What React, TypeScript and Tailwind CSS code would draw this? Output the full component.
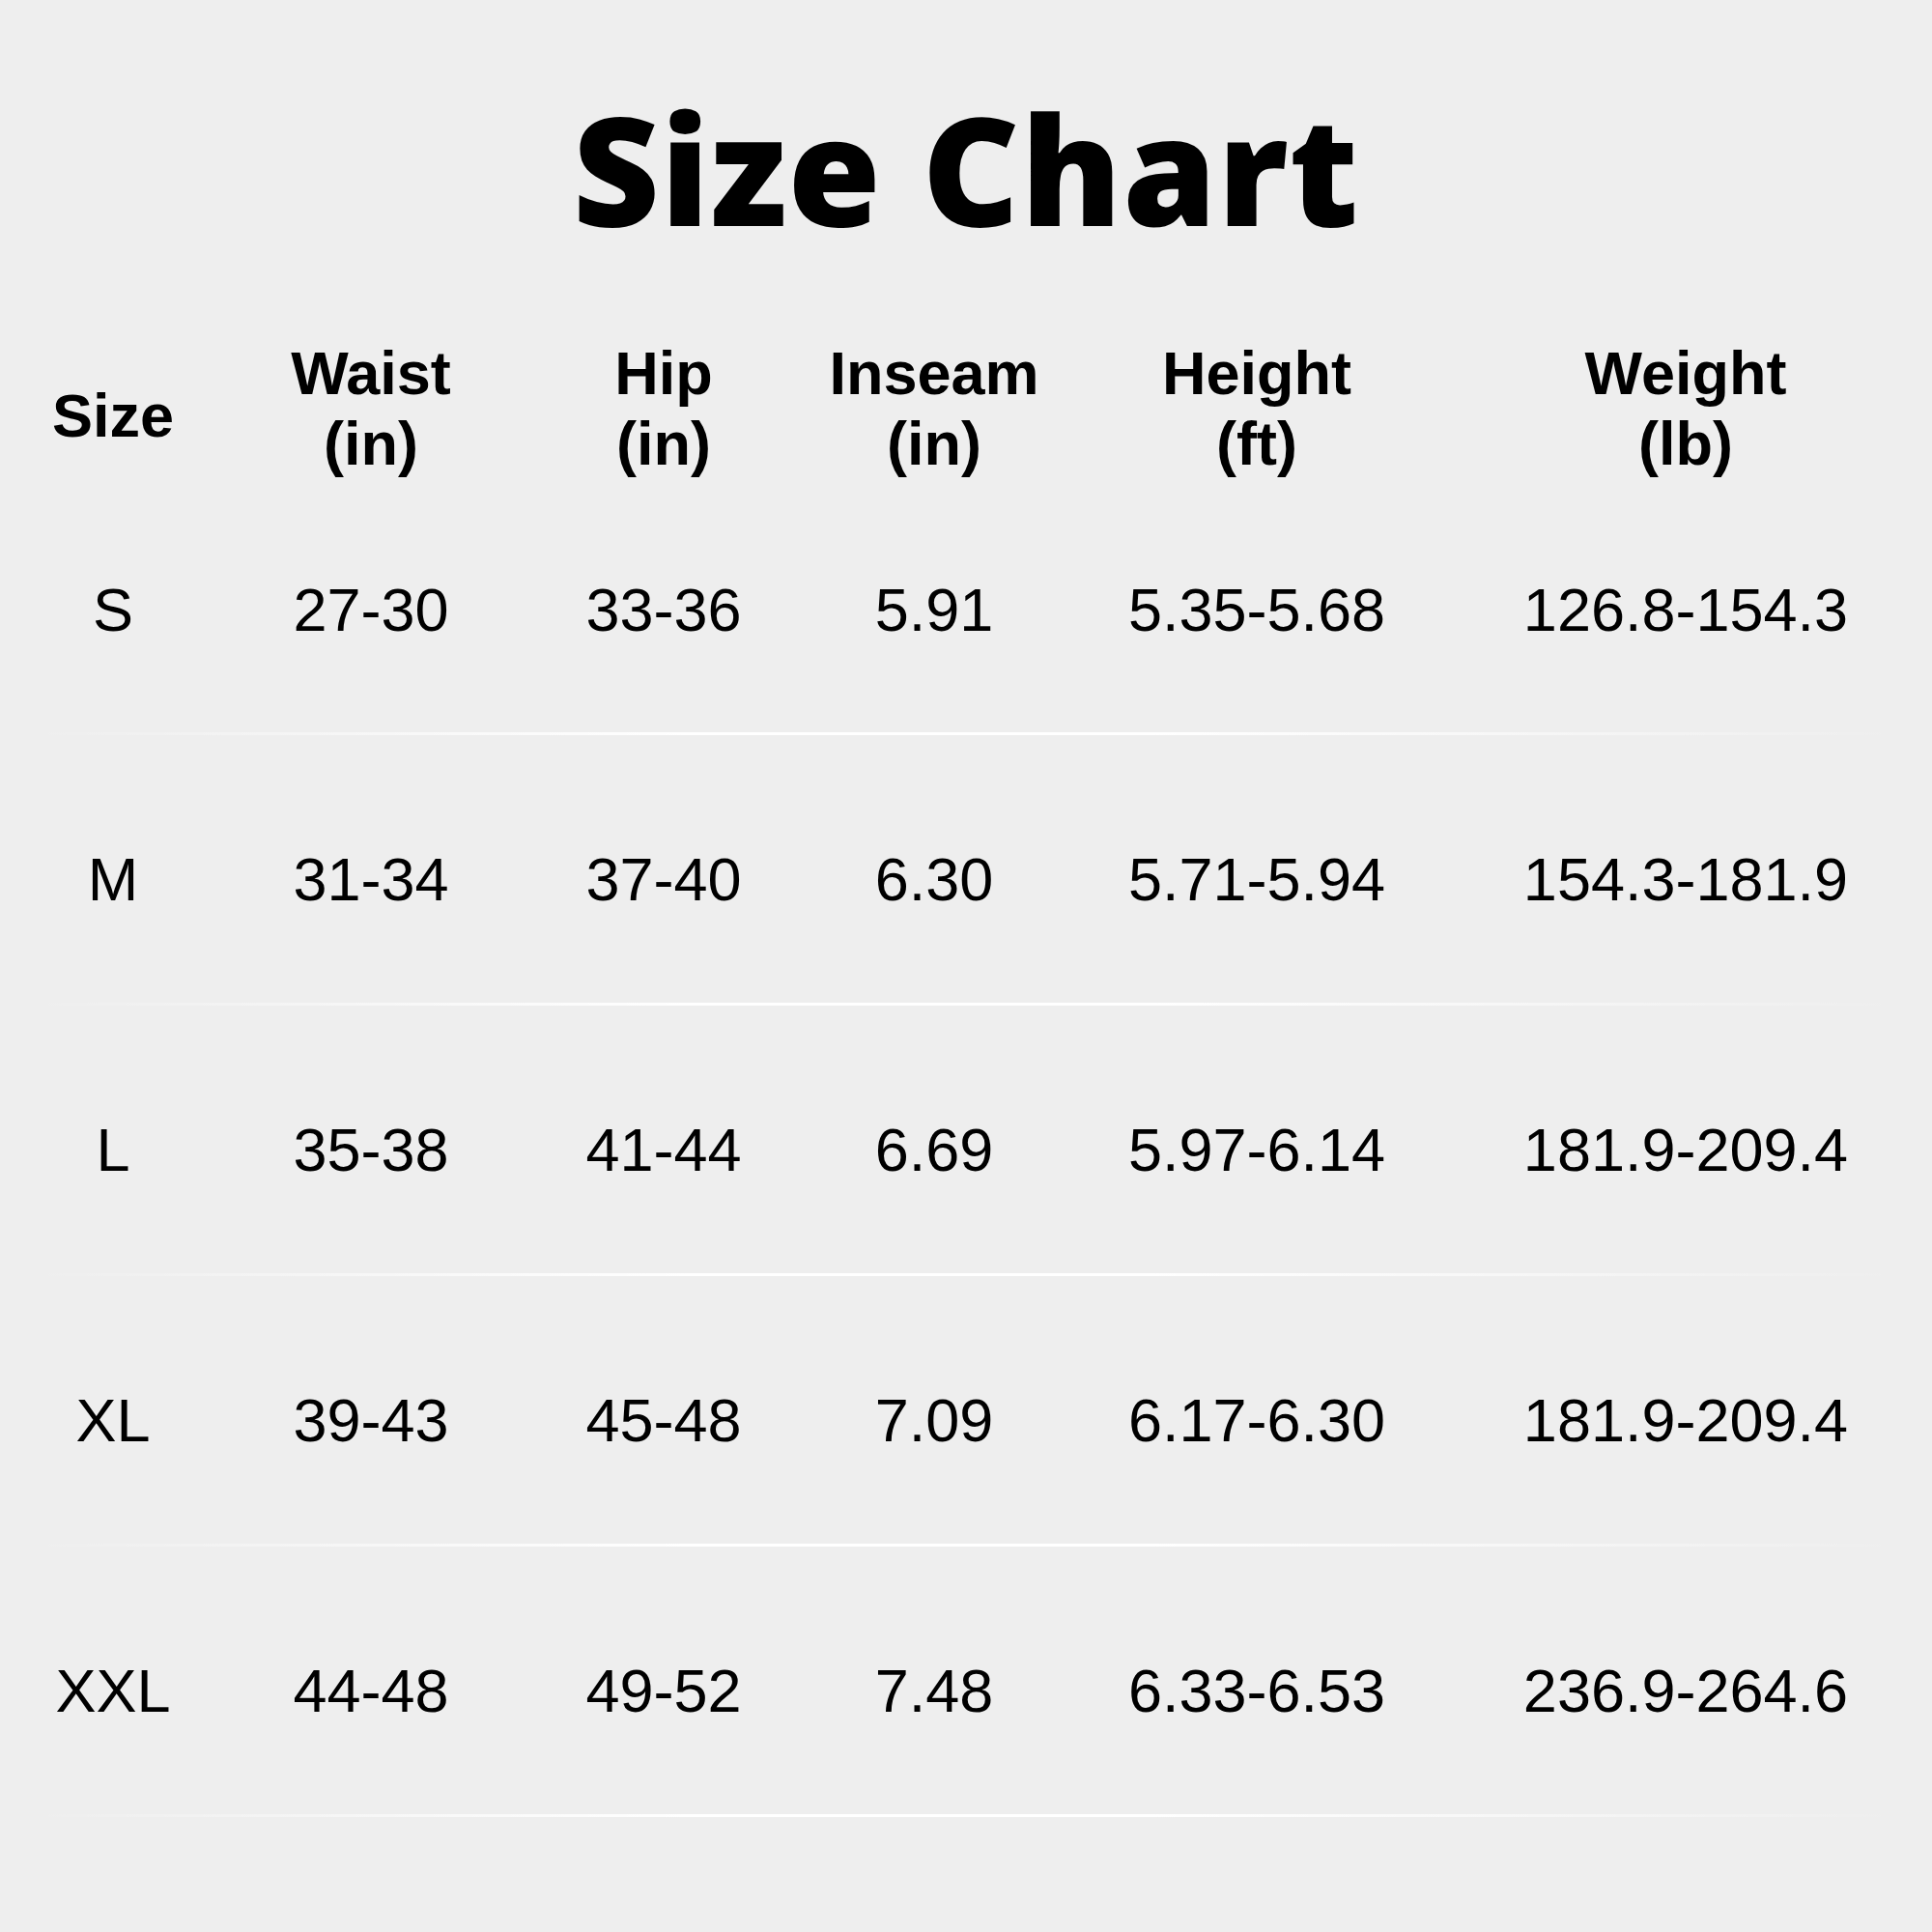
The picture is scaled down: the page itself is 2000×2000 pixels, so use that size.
const columns = [
  { w: "w-[234px]", head: ["Size"] },
  { w: "w-[300px]", head: ["Waist", "(in)"] },
  { w: "w-[306px]", head: ["Hip", "(in)"] },
  { w: "w-[254px]", head: ["Inseam", "(in)"] },
  { w: "w-[414px]", head: ["Height", "(ft)"] },
  { w: "w-[474px]", head: ["Weight", "(lb)"] },
];

const rows = [
  ["S", "27-30", "33-36", "5.91", "5.35-5.68", "126.8-154.3"],
  ["M", "31-34", "37-40", "6.30", "5.71-5.94", "154.3-181.9"],
  ["L", "35-38", "41-44", "6.69", "5.97-6.14", "181.9-209.4"],
  ["XL", "39-43", "45-48", "7.09", "6.17-6.30", "181.9-209.4"],
  ["XXL", "44-48", "49-52", "7.48", "6.33-6.53", "236.9-264.6"],
];

export default function App() {
  return (
    <div className="w-[2000px] h-[2000px] bg-[#eeeeee] text-black font-['Liberation_Sans',Arial,sans-serif]">
      {/* title */}
      <h1 className="pt-[96px] pb-[4px] text-center text-[156px] leading-none font-extrabold font-['Open_Sans',sans-serif] tracking-[1px]">
        Size Chart
      </h1>

      {/* header */}
      <div className="flex pt-[94px]">
        {columns.map((c, i) => (
          <div
            key={i}
            className={`${c.w} flex flex-col items-center justify-center text-[63px] leading-[73px] font-bold ${i === 0 ? "pt-[14px]" : ""}`}
          >
            {c.head.map((h) => (
              <span key={h}>{h}</span>
            ))}
          </div>
        ))}
      </div>

      {/* data rows */}
      {rows.map((r, ri) => (
        <div key={ri}>
          <div className={`flex ${ri === 0 ? "pt-[104px] h-[262px]" : "pt-[118px] h-[277px]"}`}>
            {r.map((v, ci) => (
              <div key={ci} className={`${columns[ci].w} text-center text-[63px] leading-[63px]`}>
                {v}
              </div>
            ))}
          </div>
          <div className="mx-[30px] h-[3px] bg-[linear-gradient(to_right,transparent,#ffffff_35%,#ffffff_60%,transparent)]" />
        </div>
      ))}
    </div>
  );
}
